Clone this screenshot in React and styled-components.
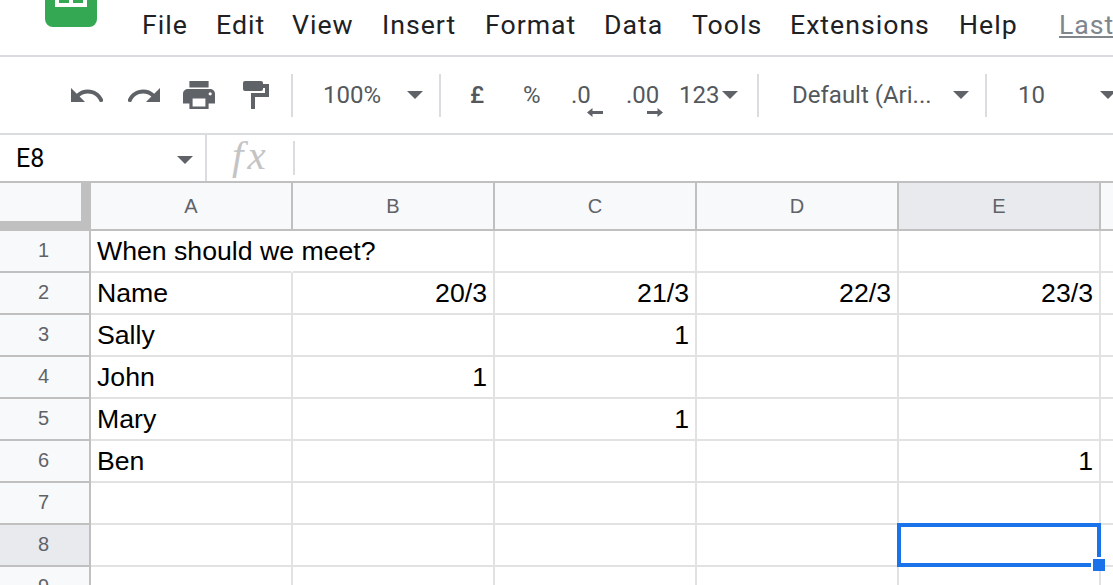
import styled, { createGlobalStyle } from "styled-components";

const GlobalStyle = createGlobalStyle`
  html, body {
    margin: 0;
    padding: 0;
    height: 100%;
    overflow: hidden;
    background: #fff;
  }
`

const menus = [
  { label: "File", w: 74 },
  { label: "Edit", w: 76 },
  { label: "View", w: 90 },
  { label: "Insert", w: 103 },
  { label: "Format", w: 119 },
  { label: "Data", w: 88 },
  { label: "Tools", w: 98 },
  { label: "Extensions", w: 169 },
  { label: "Help", w: 100 },
]

const columns = ["A", "B", "C", "D", "E"]

const rows = [
  ["When should we meet?", "", "", "", ""],
  ["Name", "20/3", "21/3", "22/3", "23/3"],
  ["Sally", "", "1", "", ""],
  ["John", "1", "", "", ""],
  ["Mary", "", "1", "", ""],
  ["Ben", "", "", "", "1"],
  ["", "", "", "", ""],
  ["", "", "", "", ""],
  ["", "", "", "", ""],
]

const Caret = () => (
  <CaretIcon viewBox="0 0 16 8"><path d="M0 0h16L8 8z" /></CaretIcon>
)

const App = () => {
  return (
    <Page>
      <GlobalStyle />
      <MenuBar>
        <Logo>
          <LogoSheet>
            <LogoCell />
            <LogoCell />
          </LogoSheet>
        </Logo>
        <MenuList>
          {menus.map((m) => (
            <MenuItem key={m.label} $w={m.w}>{m.label}</MenuItem>
          ))}
          <LastEdit>Last edit was seconds ago</LastEdit>
        </MenuList>
      </MenuBar>

      <Toolbar>
        <ToolIcon $w={32} $gap={25} viewBox="2 7 20 9">
          <path d="M12.5 8c-2.65 0-5.05.99-6.9 2.6L2 7v9h9l-3.62-3.62c1.39-1.16 3.16-1.88 5.12-1.88 3.54 0 6.55 2.31 7.6 5.5l2.37-.78C21.08 11.03 17.15 8 12.5 8z" />
        </ToolIcon>
        <ToolIcon $w={32} $gap={23} viewBox="2 7 20 9">
          <path d="M18.4 10.6C16.55 8.99 14.15 8 11.5 8c-4.65 0-8.58 3.03-9.96 7.22L3.9 16c1.05-3.19 4.05-5.5 7.6-5.5 1.95 0 3.73.72 5.12 1.88L13 16h9V7l-3.6 3.6z" />
        </ToolIcon>
        <ToolIcon $w={32} $gap={28} viewBox="2 3 20 18">
          <path d="M19 8H5c-1.66 0-3 1.34-3 3v6h4v4h12v-4h4v-6c0-1.66-1.34-3-3-3zm-3 11H8v-5h8v5zm3-7c-.55 0-1-.45-1-1s.45-1 1-1 1 .45 1 1-.45 1-1 1zm-1-9H6v4h12V3z" />
        </ToolIcon>
        <ToolIcon $w={26} $gap={22} viewBox="0 0 26 28">
          <rect width="20" height="10" rx="2" />
          <path d="M20 3h6v13H12v12H8V12h14V7h-2z" />
        </ToolIcon>
        <Divider />
        <Select $w={146} $pad={30}>
          <span>100%</span>
          <Caret />
        </Select>
        <Divider />
        <Symbol $w={75} $pad={29} $bold>£</Symbol>
        <Symbol $w={55} $pad={7}>%</Symbol>
        <Decimal $w={55}>
          .0
          <Arrow viewBox="0 0 16 9" $left={16}><path d="M0 4.5L5.5 0v3H16v3H5.5v3z" /></Arrow>
        </Decimal>
        <Decimal $w={53}>
          .00
          <Arrow viewBox="0 0 16 9" $left={21}><path d="M16 4.5L10.5 0v3H0v3h10.5v3z" /></Arrow>
        </Decimal>
        <Select $w={78} $pad={0} $tight>
          <span>123</span>
          <Caret />
        </Select>
        <Divider />
        <Select $w={226} $pad={33}>
          <span>Default (Ari...</span>
          <Caret />
        </Select>
        <Divider />
        <Select $w={145} $pad={31}>
          <span>10</span>
          <Caret />
        </Select>
      </Toolbar>

      <FormulaBar>
        <NameBox>
          <span>E8</span>
          <NameCaret><Caret /></NameCaret>
        </NameBox>
        <FormulaDivider $tall />
        <Fx>fx</Fx>
        <FormulaDivider />
      </FormulaBar>

      <Sheet>
        <Corner />
        {columns.map((c) => (
          <ColHeader key={c} $active={c === "E"}>{c}</ColHeader>
        ))}
        <Filler />
        {rows.map((row, r) => (
          <Row key={r}>
            <RowHeader $active={r === 7}>{r + 1}</RowHeader>
            {row.map((val, c) => (
              <Cell key={c} $num={c > 0} $overflow={r === 0 && c === 0}>
                {val}
                {r === 7 && c === 4 && (
                  <Selection>
                    <Handle />
                  </Selection>
                )}
              </Cell>
            ))}
            <Filler $cell />
          </Row>
        ))}
      </Sheet>
    </Page>
  );
}

const Page = styled.div`
  width: 1113px;
  height: 585px;
  overflow: hidden;
  background: #fff;
  display: flex;
  flex-direction: column;
`

const MenuBar = styled.div`
  height: 55px;
  flex: none;
  display: flex;
  align-items: flex-start;
  border-bottom: 2px solid #dadce0;
  padding-left: 45px;
`

const Logo = styled.div`
  width: 52px;
  height: 27px;
  flex: none;
  background: #34a853;
  border-radius: 0 0 8px 8px;
  display: flex;
  justify-content: center;
  align-items: flex-start;
`

const LogoSheet = styled.div`
  width: 32px;
  height: 7px;
  background: #fff;
  display: flex;
  justify-content: center;
  gap: 4px;
`

const LogoCell = styled.div`
  width: 10px;
  height: 3px;
  background: #34a853;
`

const MenuList = styled.div`
  display: flex;
  padding: 10px 0 0 45px;
  white-space: nowrap;
`

const MenuItem = styled.div`
  width: ${(p) => p.$w}px;
  flex: none;
  font: 400 26.67px/30px Roboto, sans-serif;
  letter-spacing: 1px;
  color: #202124;
`

const LastEdit = styled.div`
  font: 400 26.67px/30px Roboto, sans-serif;
  letter-spacing: 1px;
  color: #80868b;
  text-decoration: underline;
`

const Toolbar = styled.div`
  height: 76px;
  flex: none;
  display: flex;
  align-items: center;
  padding-left: 71px;
  white-space: nowrap;
  font: 400 24px/30px Roboto, sans-serif;
  color: #54585c;
`

const ToolIcon = styled.svg`
  width: ${(p) => p.$w}px;
  flex: none;
  margin-right: ${(p) => p.$gap}px;
  fill: #5f6368;
`

const Divider = styled.div`
  width: 2px;
  height: 43px;
  flex: none;
  background: #dadce0;
`

const CaretIcon = styled.svg`
  width: 16px;
  height: 8px;
  flex: none;
  fill: #5f6368;
`

const Select = styled.div`
  width: ${(p) => p.$w}px;
  flex: none;
  box-sizing: border-box;
  display: flex;
  align-items: center;
  justify-content: ${(p) => (p.$tight ? "flex-start" : "space-between")};
  gap: 3px;
  padding: 0 16px 0 ${(p) => p.$pad}px;
`

const Symbol = styled.div`
  width: ${(p) => p.$w}px;
  flex: none;
  box-sizing: border-box;
  padding-left: ${(p) => p.$pad}px;
  font-weight: ${(p) => (p.$bold ? 500 : 400)};
`

const Decimal = styled.div`
  position: relative;
  width: ${(p) => p.$w}px;
  flex: none;
`

const Arrow = styled.svg`
  position: absolute;
  left: ${(p) => p.$left}px;
  top: 28px;
  width: 16px;
  height: 9px;
  fill: #5f6368;
`

const FormulaBar = styled.div`
  height: 46px;
  flex: none;
  display: flex;
  align-items: center;
  border-top: 2px solid #dadce0;
  border-bottom: 2px solid #c0c0c0;
`

const NameBox = styled.div`
  width: 205px;
  flex: none;
  box-sizing: border-box;
  display: flex;
  align-items: center;
  justify-content: space-between;
  padding: 1px 12px 0 16px;
  font: 400 25px/30px Roboto, sans-serif;
  color: #000;
`

const NameCaret = styled.div`
  display: flex;
  margin-top: 3px;
`

const FormulaDivider = styled.div`
  width: 2px;
  height: ${(p) => (p.$tall ? "46px" : "34px")};
  flex: none;
  background: #dadce0;
`

const Fx = styled.div`
  width: 86px;
  height: 46px;
  flex: none;
  box-sizing: border-box;
  padding-left: 25px;
  font: italic 400 41px/40px "Liberation Serif", serif;
  letter-spacing: 4px;
  color: #c4c4c4;
`

const Sheet = styled.div`
  display: grid;
  grid-template-columns: 91px repeat(5, 202px) 1fr;
  grid-template-rows: 48px;
  grid-auto-rows: 42px;
  font-family: "Liberation Sans", Arial, sans-serif;
`

const Row = styled.div`
  display: contents;
`

const Corner = styled.div`
  box-sizing: border-box;
  background: #f8f9fa;
  border-right: 10px solid #c0c0c0;
  border-bottom: 10px solid #c0c0c0;
`

const ColHeader = styled.div`
  box-sizing: border-box;
  display: flex;
  align-items: center;
  justify-content: center;
  background: ${(p) => (p.$active ? "#e8eaed" : "#f8f9fa")};
  border-right: 2px solid #c0c0c0;
  border-bottom: 2px solid #c0c0c0;
  font-size: 20px;
  color: #5f6368;
`

const RowHeader = styled.div`
  display: flex;
  align-items: center;
  justify-content: center;
  box-sizing: border-box;
  padding: 0 2px 2px 0;
  background: ${(p) => (p.$active ? "#e8eaed" : "#f8f9fa")};
  border-right: 2px solid #c0c0c0;
  border-bottom: 2px solid #c0c0c0;
  font-size: 20px;
  color: #5f6368;
`

const Cell = styled.div`
  position: relative;
  box-sizing: border-box;
  display: flex;
  align-items: center;
  justify-content: ${(p) => (p.$num ? "flex-end" : "flex-start")};
  padding: 0 6px;
  border-right: 2px solid ${(p) => (p.$overflow ? "transparent" : "#e2e2e2")};
  border-bottom: 2px solid #e2e2e2;
  font-size: 26.67px;
  color: #000;
  white-space: nowrap;
`

const Filler = styled.div`
  box-sizing: border-box;
  background: ${(p) => (p.$cell ? "#fff" : "#f8f9fa")};
  border-bottom: 2px solid ${(p) => (p.$cell ? "#e2e2e2" : "#c0c0c0")};
`

const Selection = styled.div`
  position: absolute;
  z-index: 2;
  left: -2px;
  top: -2px;
  right: -2px;
  bottom: -2px;
  border: 4px solid #1a73e8;
`

const Handle = styled.div`
  position: absolute;
  right: -8px;
  bottom: -8px;
  width: 12px;
  height: 12px;
  background: #1a73e8;
  border: solid #fff;
  border-width: 2px 0 0 2px;
`

export default App;
